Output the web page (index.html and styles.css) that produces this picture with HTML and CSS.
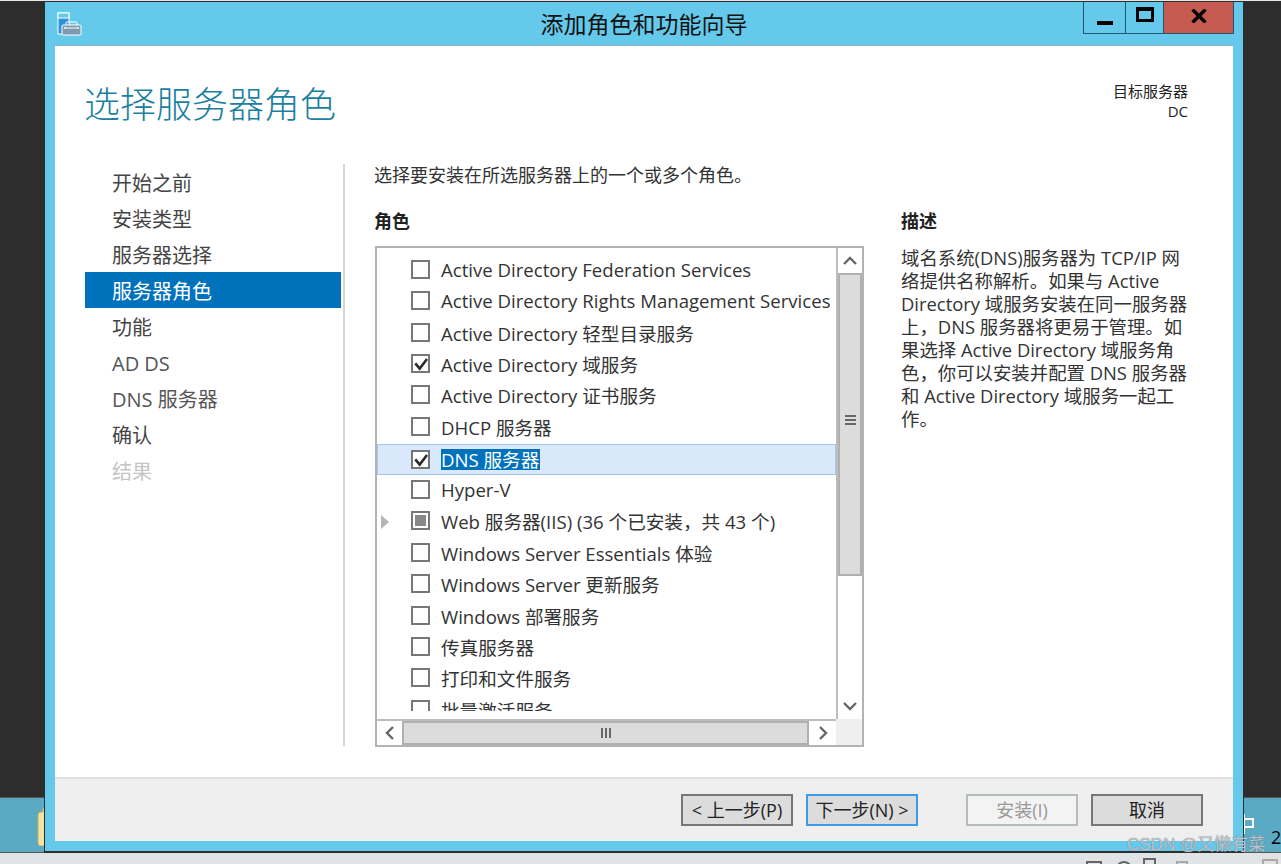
FILE: index.html
```html
<!DOCTYPE html>
<html lang="zh-CN">

<head>
    <meta charset="utf-8">
    <title>添加角色和功能向导</title>
    <link rel="stylesheet" href="styles.css">
</head>

<body>
    <div class="topline"></div>
    <div class="desk">
        <svg class="folder" width="10" height="44" viewBox="0 0 10 44">
            <path d="M7 6h3v38H5q-3 0-3-3V13q0-3 3-3h2z" fill="#f3e3a0" stroke="#c9ae62" />
        </svg>
        <svg class="tray-flag" width="12" height="20" viewBox="0 0 12 20">
            <path d="M1 0v20M1 5h9v8H1" fill="none" stroke="#fff" stroke-width="2" />
        </svg>
        <span class="clock">2</span>
    </div>
    <div class="taskbar">
        <span class="tray tray-a"></span>
        <span class="tray tray-b"></span>
        <span class="tray tray-c"></span>
        <span class="tray tray-d"></span>
        <span class="tray tray-e"></span>
    </div>

    <section class="window">
        <header class="titlebar">
            <svg class="appicon" width="25" height="25" viewBox="0 0 25 25">
                <rect x="1" y="1" width="11" height="21" fill="#2d94dc" stroke="#fff" />
                <rect x="1" y="1" width="11" height="5" fill="#66c9eb" stroke="#fff" />
                <path d="M9 13v-2q0-1 1-1h9q1 0 1 1v2" fill="none" stroke="#fff" />
                <rect x="5" y="13" width="19" height="10" rx="1" fill="#7e99ad" stroke="#fff" />
                <path d="M7 16h15M8 15v2M21 15v2" stroke="#fff" fill="none" />
            </svg>
            <h1>添加角色和功能向导</h1>
            <div class="winbtns">
                <button class="winbtn min"><span></span></button>
                <button class="winbtn max"><span></span></button>
                <button class="winbtn close">
                    <svg width="16" height="14" viewBox="0 0 16 14">
                        <path d="M1.5 0.5l13 13M14.5 0.5l-13 13" stroke="#000" stroke-width="3.4" fill="none" />
                    </svg>
                </button>
            </div>
        </header>

        <div class="client">
            <div class="content">
                <div class="head">
                    <h2>选择服务器角色</h2>
                    <div class="target">
                        <div>目标服务器</div>
                        <div>DC</div>
                    </div>
                </div>

                <div class="columns">
                    <nav class="steps">
                        <a>开始之前</a>
                        <a>安装类型</a>
                        <a>服务器选择</a>
                        <a class="current">服务器角色</a>
                        <a>功能</a>
                        <a class="later">AD DS</a>
                        <a class="later">DNS 服务器</a>
                        <a>确认</a>
                        <a class="off">结果</a>
                    </nav>

                    <div class="main">
                        <p class="intro">选择要安装在所选服务器上的一个或多个角色。</p>
                        <div class="panels">
                            <div class="roles">
                                <h3>角色</h3>
                                <div class="listbox">
                                    <ul class="rolelist">
                                        <li><i class="box"></i>Active Directory Federation Services</li>
                                        <li><i class="box"></i>Active Directory Rights Management Services</li>
                                        <li><i class="box"></i>Active Directory 轻型目录服务</li>
                                        <li><i class="box"><svg class="check" width="15" height="15" viewBox="0 0 15 15"><path d="M2.3 7.3L6.7 12.6 14 3" /></svg></i>Active Directory 域服务</li>
                                        <li><i class="box"></i>Active Directory 证书服务</li>
                                        <li><i class="box"></i>DHCP 服务器</li>
                                        <li class="picked"><i class="box"><svg class="check" width="15" height="15" viewBox="0 0 15 15"><path d="M2.3 7.3L6.7 12.6 14 3" /></svg></i><span>DNS 服务器</span></li>
                                        <li><i class="box"></i>Hyper-V</li>
                                        <li class="tree"><b class="arrow"></b><i class="box part"></i>Web 服务器(IIS) (36 个已安装，共 43 个)</li>
                                        <li><i class="box"></i>Windows Server Essentials 体验</li>
                                        <li><i class="box"></i>Windows Server 更新服务</li>
                                        <li><i class="box"></i>Windows 部署服务</li>
                                        <li><i class="box"></i>传真服务器</li>
                                        <li><i class="box"></i>打印和文件服务</li>
                                        <li><i class="box"></i>批量激活服务</li>
                                    </ul>
                                    <div class="vbar">
                                        <button class="sbtn"><svg width="14" height="9" viewBox="0 0 14 9"><path d="M1 8l6-6 6 6" /></svg></button>
                                        <div class="vtrack">
                                            <div class="vthumb"><em></em><em></em><em></em></div>
                                        </div>
                                        <button class="sbtn"><svg width="14" height="9" viewBox="0 0 14 9"><path d="M1 1l6 6 6-6" /></svg></button>
                                    </div>
                                    <div class="hbar">
                                        <button class="sbtn"><svg width="9" height="14" viewBox="0 0 9 14"><path d="M8 1L2 7l6 6" /></svg></button>
                                        <div class="htrack">
                                            <div class="hthumb"><em></em><em></em><em></em></div>
                                        </div>
                                        <button class="sbtn"><svg width="9" height="14" viewBox="0 0 9 14"><path d="M1 1l6 6-6 6" /></svg></button>
                                    </div>
                                    <div class="corner"></div>
                                </div>
                            </div>
                            <aside class="desc">
                                <h3>描述</h3>
                                <p>域名系统(DNS)服务器为 TCP/IP 网<br>络提供名称解析。如果与 Active<br>Directory 域服务安装在同一服务器<br>上，DNS 服务器将更易于管理。如<br>果选择 Active Directory 域服务角<br>色，你可以安装并配置 DNS 服务器<br>和 Active Directory 域服务一起工<br>作。</p>
                            </aside>
                        </div>
                    </div>
                </div>
            </div>

            <footer class="actions">
                <button class="btn">&lt; 上一步(P)</button>
                <button class="btn default">下一步(N) &gt;</button>
                <button class="btn disabled">安装(I)</button>
                <button class="btn">取消</button>
            </footer>
        </div>
    </section>

    <div class="watermark">CSDN @又懒有菜</div>
</body>

</html>
```

FILE: styles.css
```css
* {
    box-sizing: border-box;
}

body {
    margin: 0;
    width: 1281px;
    height: 864px;
    position: relative;
    overflow: hidden;
    background-color: #2d2d2d;
    font-family: "Open Sans", "Noto Sans CJK SC", sans-serif;
    color: #222;
}

button {
    font-family: inherit;
    padding: 0;
}

h1, h2, h3, p, ul {
    margin: 0;
    padding: 0;
}

.topline {
    height: 1px;
    background-color: #e6e6e6;
}

.desk {
    position: absolute;
    left: 0;
    top: 797px;
    width: 100%;
    height: 55px;
    background-color: #5aaac4;
    border-top: 1px solid #555;
}

.folder {
    position: absolute;
    left: 36px;
    top: 4px;
}

.tray-flag {
    position: absolute;
    left: 1243px;
    top: 16px;
}

.clock {
    position: absolute;
    left: 1271px;
    top: 27px;
    font-size: 18px;
    line-height: 24px;
    color: #000;
}

.taskbar {
    position: absolute;
    left: 0;
    top: 852px;
    width: 100%;
    height: 12px;
    background-color: #e2e3e4;
    border-top: 1px solid #555;
}

.tray {
    position: absolute;
    top: 8px;
    width: 16px;
    height: 12px;
    border: 2px solid #666;
}

.tray-a { left: 1086px; }
.tray-b { left: 1116px; border-radius: 50%; height: 16px; }
.tray-c { left: 1143px; top: 5px; width: 13px; }
.tray-d { left: 1176px; border-color: #aaa; width: 12px; }
.tray-e { left: 1262px; border-color: #aaa; top: 6px; }

.window {
    position: absolute;
    left: 44px;
    top: 1px;
    width: 1200px;
    height: 852px;
    background-color: #65c9eb;
    border: 1px solid #2d2d2d;
    border-bottom-width: 2px;
    display: flex;
    flex-direction: column;
    padding: 0 10px 10px;
}

.titlebar {
    height: 44px;
    flex: none;
    display: flex;
    align-items: flex-start;
    position: relative;
}

.appicon {
    position: absolute;
    left: 2px;
    top: 10px;
}

.titlebar h1 {
    flex: 1;
    text-align: center;
    font-size: 23px;
    font-weight: 400;
    line-height: 44px;
    color: #111;
}

.winbtns {
    position: absolute;
    right: -1px;
    top: 0;
    display: flex;
    height: 32px;
}

.winbtn {
    height: 32px;
    border: 1px solid #24556b;
    border-top: 0;
    border-left: 0;
    background-color: #65c9eb;
    display: flex;
    align-items: center;
    justify-content: center;
}

.winbtn.min {
    width: 43px;
    border-left: 1px solid #24556b;
}

.winbtn.min span {
    width: 16px;
    height: 4px;
    background-color: #000;
    margin-top: 11px;
}

.winbtn.max {
    width: 38px;
}

.winbtn.max span {
    width: 18px;
    height: 15px;
    border: 3px solid #000;
    border-top-width: 4px;
    margin-bottom: 6px;
}

.winbtn.close {
    width: 70px;
    background-color: #c55b51;
}

.winbtn.close svg {
    margin-bottom: 4px;
}

.client {
    flex: 1;
    display: flex;
    flex-direction: column;
    background-color: #fff;
    box-shadow: 0 -1px 0 #8fb7c9;
}

.content {
    flex: 1;
    padding-left: 30px;
    min-height: 0;
}

.head {
    display: flex;
    justify-content: space-between;
    height: 118px;
    padding-right: 45px;
}

.head h2 {
    font-size: 36px;
    font-weight: 300;
    line-height: 50px;
    padding-top: 34px;
    margin-left: -1px;
    color: #1a7fa0;
    box-sizing: content-box;
}

.target {
    padding-top: 35px;
    font-size: 15px;
    line-height: 20px;
    text-align: right;
    color: #222;
}

.columns {
    display: flex;
}

.steps {
    width: 260px;
    height: 582px;
    padding: 0 2px 0 0;
    border-right: 2px solid #d6d6d6;
    display: flex;
    flex-direction: column;
}

.steps a {
    height: 36px;
    padding-left: 27px;
    font-size: 20px;
    line-height: 40px;
    overflow: hidden;
    color: #444;
}

.steps .later {
    color: #555;
}

.steps .off {
    color: #c4c4c4;
}

.steps .current {
    background-color: #0072bc;
    color: #fff;
}

.main {
    flex: 1;
    padding: 1px 0 0 29px;
}

.intro {
    font-size: 18px;
    line-height: 20px;
    color: #333;
}

.panels {
    display: flex;
    padding-top: 25px;
}

.roles {
    width: 490px;
}

.roles h3, .desc h3 {
    font-size: 18px;
    font-weight: 700;
    line-height: 22px;
    color: #222;
}

.listbox {
    margin: 14px 0 0 1px;
    width: 489px;
    height: 501px;
    border: 2px solid #b3b3b3;
    display: grid;
    grid-template-columns: 1fr 26px;
    grid-template-rows: 1fr 26px;
    background-color: #fff;
}

.rolelist {
    list-style: none;
    overflow: hidden;
    padding-top: 5.5px;
    height: 463px;
}

.rolelist li {
    height: 31.45px;
    display: flex;
    align-items: center;
    padding-left: 34px;
    font-size: 18.6px;
    white-space: nowrap;
    color: #333;
    position: relative;
}

.box {
    flex: none;
    width: 19px;
    height: 19px;
    border: 2px solid #777;
    margin-right: 11px;
    background-color: #fff;
    position: relative;
}

.check {
    display: block;
}

.check path {
    fill: none;
    stroke: #2a2a2a;
    stroke-width: 2.6;
}

.box.part::after {
    content: "";
    position: absolute;
    left: 2px;
    top: 2px;
    width: 11px;
    height: 11px;
    background-color: #888;
}

.rolelist .picked {
    margin: 1.5px 0 -1.5px;
    background-color: #d9e9fb;
    box-shadow: inset 0 0 0 1px #a3c6ec;
    color: #fff;
}

.picked span {
    background-color: #0072bc;
    line-height: 21px;
    padding-right: 1px;
}

.arrow {
    position: absolute;
    left: 4px;
    top: 10px;
    width: 0;
    height: 0;
    border-left: 8px solid #b5b5b5;
    border-top: 7px solid transparent;
    border-bottom: 7px solid transparent;
}

.vbar {
    display: flex;
    flex-direction: column;
    background-color: #efefef;
    border-left: 2px solid #bdbdbd;
    min-height: 0;
}

.vtrack {
    flex: 1;
    background-color: #fff;
}

.vthumb {
    height: 303px;
    background-color: #dcdcdc;
    border: 2px solid #b0b0b0;
    display: flex;
    flex-direction: column;
    gap: 2px;
    align-items: center;
    padding-top: 140px;
}

.vthumb em {
    width: 11px;
    height: 2px;
    background-color: #666;
}

.hbar {
    display: flex;
    background-color: #efefef;
    border-top: 2px solid #bdbdbd;
}

.htrack {
    flex: 1;
    background-color: #fff;
}

.hthumb {
    width: 407px;
    height: 100%;
    background-color: #dcdcdc;
    border: 2px solid #b0b0b0;
    display: flex;
    gap: 2px;
    justify-content: center;
    align-items: center;
}

.hthumb em {
    width: 2px;
    height: 10px;
    background-color: #666;
}

.sbtn {
    flex: none;
    width: 25px;
    height: 24px;
    background-color: #fff;
    border: 0;
    display: flex;
    align-items: center;
    justify-content: center;
}

.vbar .sbtn {
    height: 25px;
    width: 24px;
}

.sbtn path {
    fill: none;
    stroke: #666;
    stroke-width: 2.4;
}

.corner {
    background-color: #efefef;
}

.desc {
    padding-left: 37px;
    flex: 1;
}

.desc p {
    margin-top: 14px;
    font-size: 18.4px;
    line-height: 23px;
    color: #333;
    white-space: nowrap;
}

.actions {
    flex: none;
    height: 64px;
    background-color: #efefef;
    border-top: 2px solid #e0e0e0;
    display: flex;
    align-items: flex-start;
    padding: 15px 30px 0 0;
    justify-content: flex-end;
}

.btn {
    width: 112px;
    height: 32px;
    border: 2px solid #777;
    background-color: #dcdcdc;
    font-size: 18px;
    line-height: 26px;
    color: #222;
    margin-left: 13px;
}

.btn.default {
    border-color: #3a9be8;
}

.btn.disabled {
    margin-left: 48px;
    background-color: #f3f3f3;
    border-color: #b5bcbc;
    color: #999;
}

.watermark {
    position: absolute;
    left: 1127px;
    top: 834px;
    font-family: "Liberation Sans", "Noto Sans CJK SC", sans-serif;
    font-size: 17px;
    line-height: 22px;
    color: #b9c4ca;
    text-shadow: 0 0 1px #778;
    white-space: nowrap;
}
```
